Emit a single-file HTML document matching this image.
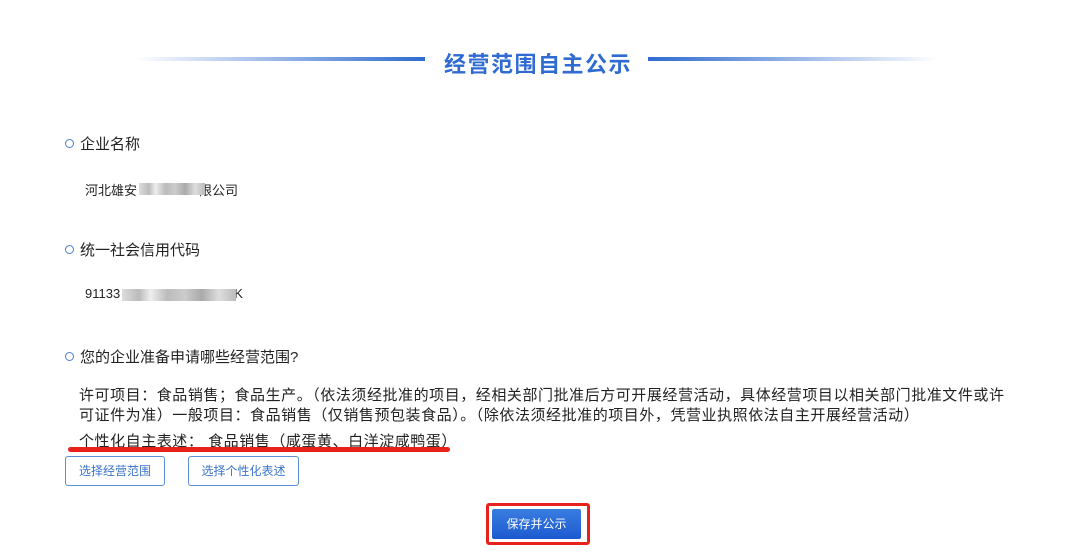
<!DOCTYPE html>
<html><head><meta charset="utf-8"><style>
body{margin:0;width:1080px;height:554px;background:#fff;font-family:"Liberation Sans","Noto Sans CJK SC",sans-serif;color:#222;position:relative;overflow:hidden}
.a{position:absolute;white-space:nowrap}
.dot{position:absolute;width:7px;height:7px;border:1.5px solid #4a7bd0;border-radius:50%}
.btn{position:absolute;border:1px solid #5b8fd6;border-radius:3px;color:#3a73c9;font-size:12px;text-align:center;box-sizing:border-box}
.blur{position:absolute;background:linear-gradient(90deg,#ddd,#bbb 15%,#eee 25%,#bbb 40%,#ccc 55%,#aaa 70%,#ddd 85%,#bbb);height:12px}
</style></head><body>
<div class="a" style="left:135px;top:57px;width:290px;height:4px;background:linear-gradient(90deg,rgba(47,107,208,0),#2f6bd0)"></div>
<div class="a" style="left:648px;top:57px;width:290px;height:4px;background:linear-gradient(90deg,#2f6bd0,rgba(47,107,208,0))"></div>
<div class="a" style="left:444px;top:47px;font-size:22px;font-weight:bold;color:#2f6bd0;letter-spacing:1.5px">经营范围自主公示</div>

<div class="dot" style="left:65px;top:139px"></div>
<div class="a" style="left:80px;top:133px;font-size:15px">企业名称</div>
<div class="a" style="left:85px;top:180px;font-size:13px">河北雄安<span style="display:inline-block;width:62px"></span>限公司</div>
<div class="blur" style="left:139px;top:183px;width:66px"></div>

<div class="dot" style="left:65px;top:245px"></div>
<div class="a" style="left:80px;top:239px;font-size:15px">统一社会信用代码</div>
<div class="a" style="left:85px;top:286px;font-size:13px">91133<span style="display:inline-block;width:114px"></span>K</div>
<div class="blur" style="left:122px;top:289px;width:114px"></div>

<div class="dot" style="left:65px;top:352px"></div>
<div class="a" style="left:80px;top:346px;font-size:15px">您的企业准备申请哪些经营范围?</div>

<div class="a" style="left:79px;top:386px;font-size:15px;line-height:20px;letter-spacing:0.55px">许可项目：食品销售；食品生产。（依法须经批准的项目，经相关部门批准后方可开展经营活动，具体经营项目以相关部门批准文件或许<br>可证件为准）一般项目：食品销售（仅销售预包装食品）。（除依法须经批准的项目外，凭营业执照依法自主开展经营活动）</div>
<div class="a" style="left:79px;top:430px;font-size:15px;letter-spacing:0.55px">个性化自主表述： 食品销售（咸蛋黄、白洋淀咸鸭蛋）</div>
<div class="a" style="left:68px;top:447px;width:382px;height:5px;background:#e8211a;border-radius:3px"></div>

<div class="btn" style="left:65px;top:456px;width:100px;height:30px;line-height:28px">选择经营范围</div>
<div class="btn" style="left:188px;top:456px;width:111px;height:30px;line-height:28px">选择个性化表述</div>

<div class="a" style="left:486px;top:503px;width:104px;height:42px;border:3px solid #e8211a;border-radius:3px;box-sizing:border-box"></div>
<div class="a" style="left:492px;top:509px;width:89px;height:30px;background:linear-gradient(180deg,#3a7de0,#1b5ad0);color:#fff;font-size:12px;line-height:30px;text-align:center;border-radius:2px">保存并公示</div>
</body></html>
